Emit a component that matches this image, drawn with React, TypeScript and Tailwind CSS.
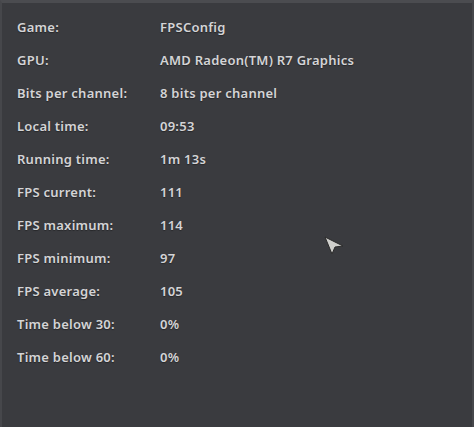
const rows: [string, string][] = [
  ["Game:", "FPSConfig"],
  ["GPU:", "AMD Radeon(TM) R7 Graphics"],
  ["Bits per channel:", "8 bits per channel"],
  ["Local time:", "09:53"],
  ["Running time:", "1m 13s"],
  ["FPS current:", "111"],
  ["FPS maximum:", "114"],
  ["FPS minimum:", "97"],
  ["FPS average:", "105"],
  ["Time below 30:", "0%"],
  ["Time below 60:", "0%"],
];

export default function App() {
  return (
    <div className="relative h-[427px] w-[474px] overflow-hidden border-t-[3px] border-l-2 border-r-2 border-t-[#4b4c50] border-l-[#46474b] border-r-[#46474b] bg-[#3a3b3f] font-['Noto_Sans',sans-serif] text-[13px] font-semibold tracking-[0.25px] text-[#d4d4d6]">
      <div className="flex flex-col gap-[13px] pl-[15px] pt-[15px]">
        {rows.map(([label, value]) => (
          <div key={label} className="flex h-[20px] items-center [text-shadow:0_1px_1px_rgba(0,0,0,0.35)]">
            <span className="w-[143px] shrink-0">{label}</span>
            <span>{value}</span>
          </div>
        ))}
      </div>
      <svg className="absolute left-[321px] top-[232px]" width="22" height="22" viewBox="0 0 22 22">
        <path d="M2 2 L20 11 L12 12 L9 19 Z" fill="#cfcfcc" stroke="#2a2a2a" strokeWidth="1" strokeLinejoin="round" />
      </svg>
    </div>
  );
}
